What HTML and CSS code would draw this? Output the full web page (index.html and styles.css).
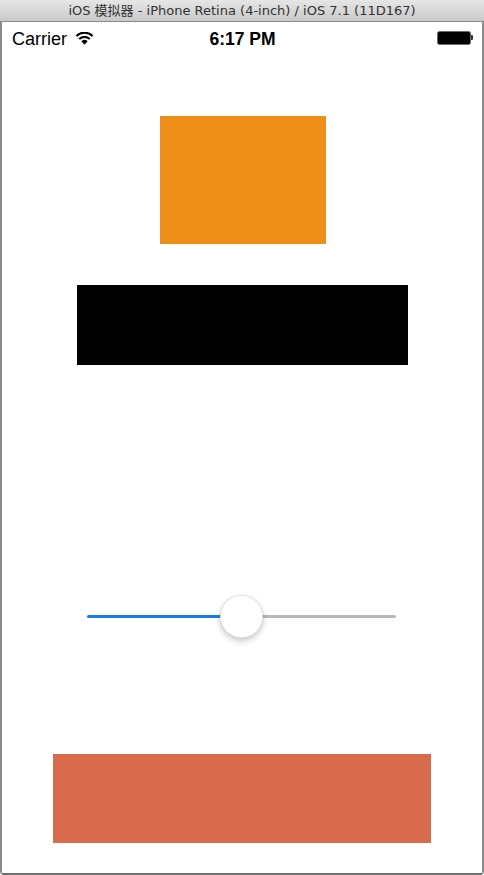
FILE: index.html
```html
<!DOCTYPE html>
<html lang="zh-CN">
<head>
<meta charset="utf-8">
<title>iOS 模拟器</title>
<link rel="stylesheet" href="styles.css">
</head>
<body>
<div class="window">
  <div class="titlebar">iOS 模拟器 - iPhone Retina (4-inch) / iOS 7.1 (11D167)</div>
  <div class="screen">
    <div class="statusbar">
      <div class="status-left">
        <span class="carrier">Carrier</span>
        <svg class="wifi" width="19" height="13" viewBox="0 0 19 13">
          <path d="M9.5 12.8 L6.4 9.2 A4.5 4.5 0 0 1 12.6 9.2 Z" fill="#000"/>
          <path d="M4.2 7.0 A7.5 7.5 0 0 1 14.8 7.0" fill="none" stroke="#000" stroke-width="2.2"/>
          <path d="M1.4 4.1 A11.4 11.4 0 0 1 17.6 4.1" fill="none" stroke="#000" stroke-width="2.2"/>
        </svg>
      </div>
      <div class="time">6:17 PM</div>
      <div class="status-right">
        <div class="battery"></div>
        <div class="battery-nub"></div>
      </div>
    </div>
    <div class="box box-orange"></div>
    <div class="box box-black"></div>
    <div class="slider">
      <div class="track track-min"></div>
      <div class="track track-max"></div>
      <div class="thumb"></div>
    </div>
    <div class="box box-red"></div>
  </div>
</div>
</body>
</html>
```
FILE: styles.css
```css
html, body {
  margin: 0;
  padding: 0;
  background: #ffffff;
}
body {
  width: 484px;
  height: 875px;
  overflow: hidden;
}
.window {
  width: 480px;
  height: 873px;
  border-left: 2px solid #8c8c8c;
  border-right: 2px solid #8c8c8c;
  border-bottom: 2px solid #6f6f6f;
  border-radius: 0 0 4px 4px;
  background: #ffffff;
  display: flex;
  flex-direction: column;
}
.titlebar {
  height: 21px;
  border-bottom: 1px solid #8a8a8a;
  background: linear-gradient(#e6e6e6, #c9c9c9);
  margin: 0 -2px;
  font-family: "DejaVu Sans", "Noto Sans CJK SC", sans-serif;
  font-size: 13px;
  line-height: 22px;
  color: #333333;
  text-align: center;
  white-space: nowrap;
}
.screen {
  flex: 1;
  display: flex;
  flex-direction: column;
  align-items: flex-start;
  background: #ffffff;
}
.statusbar {
  width: 100%;
  box-sizing: border-box;
  height: 30px;
  padding: 4px 9px 0 10px;
  display: grid;
  grid-template-columns: 1fr auto 1fr;
  align-items: center;
  font-family: "Liberation Sans", Arial, sans-serif;
  font-size: 18px;
  color: #000;
}
.status-left {
  display: flex;
  align-items: center;
  gap: 8px;
}
.wifi {
  display: block;
  margin-top: -1px;
}
.time {
  font-weight: bold;
  font-size: 17.5px;
}
.status-right {
  display: flex;
  justify-content: flex-end;
  align-items: center;
  margin-top: -3px;
}
.battery {
  width: 32px;
  height: 12px;
  border: 1px solid #6a6a6a;
  border-radius: 2.5px;
  background: #000;
}
.battery-nub {
  width: 2px;
  height: 5px;
  background: #333;
  border-radius: 0 1px 1px 0;
}
.box {
  flex: none;
}
.box-orange {
  width: 166px;
  height: 128px;
  margin: 64px 0 0 158px;
  background: #ee8f1a;
}
.box-black {
  width: 331px;
  height: 80px;
  margin: 41px 0 0 75px;
  background: #000000;
}
.slider {
  position: relative;
  width: 309px;
  height: 43px;
  margin: 230px 0 0 85px;
  display: flex;
  align-items: center;
}
.track {
  height: 2.5px;
  flex: 1;
}
.track-min {
  background: #1a7cf2;
  border-radius: 2px 0 0 2px;
}
.track-max {
  background: #b8b8b8;
  border-radius: 0 2px 2px 0;
}
.thumb {
  position: absolute;
  left: calc(50% - 21.5px);
  top: 0;
  width: 43px;
  height: 43px;
  box-sizing: border-box;
  border-radius: 50%;
  background: #ffffff;
  border: 0.5px solid rgba(0, 0, 0, 0.08);
  box-shadow: 0 3px 6px rgba(0, 0, 0, 0.22), 0 0 1px rgba(0, 0, 0, 0.15);
}
.box-red {
  width: 378px;
  height: 89px;
  margin: 116px 0 0 51px;
  background: #d76b4b;
}
```
